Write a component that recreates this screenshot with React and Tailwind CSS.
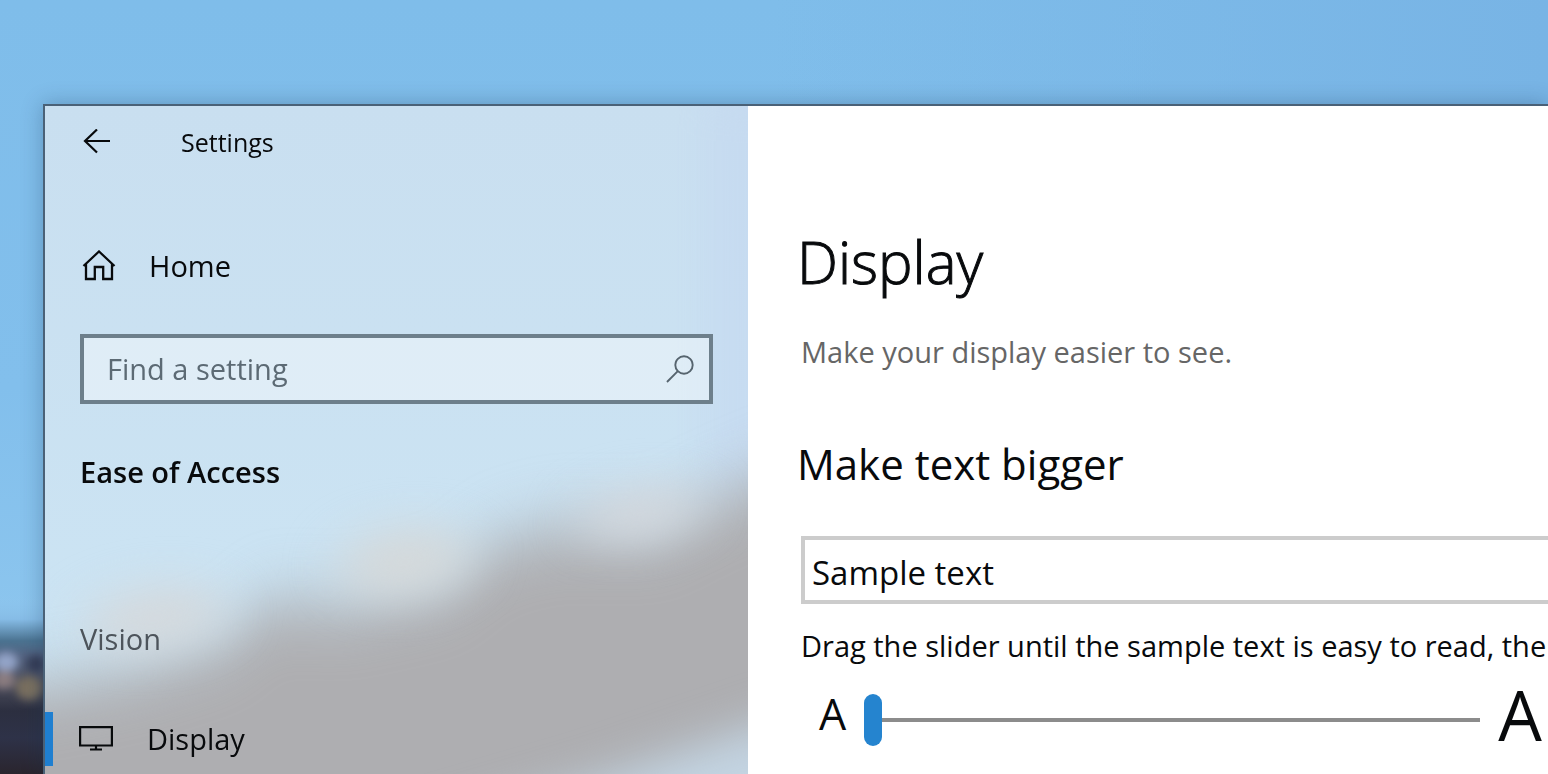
import { useState } from 'react';

// --- WALLPAPER ---
function Wallpaper() {
  return (
    <div className="absolute inset-0 bg-gradient-to-b from-[#7fbdea] via-[#82bfec] to-[#92c9ef]">
      <div className="absolute inset-0 bg-gradient-to-r from-transparent via-transparent to-[#78b4e5]" />
      <svg className="absolute bottom-0 left-0" width="60" height="180" viewBox="0 594 60 180" aria-hidden="true">
        <defs>
          <linearGradient id="shore" x1="0" y1="594" x2="0" y2="774" gradientUnits="userSpaceOnUse">
            <stop offset="0" stopColor="#8fc6ee" stopOpacity="0" />
            <stop offset="0.14" stopColor="#86bce6" />
            <stop offset="0.26" stopColor="#4b7391" />
            <stop offset="0.34" stopColor="#536482" />
            <stop offset="0.5" stopColor="#4b4d5c" />
            <stop offset="0.65" stopColor="#2c2f40" />
            <stop offset="0.8" stopColor="#2e3248" />
            <stop offset="1" stopColor="#2a252e" />
          </linearGradient>
          <filter id="soft" x="-100%" y="-100%" width="300%" height="300%" colorInterpolationFilters="sRGB">
            <feGaussianBlur stdDeviation="4" />
          </filter>
        </defs>
        <rect y="594" width="60" height="180" fill="url(#shore)" />
        <g filter="url(#soft)">
          <ellipse cx="6" cy="662" rx="12" ry="10" fill="#93a4c8" />
          <ellipse cx="4" cy="680" rx="11" ry="9" fill="#8c7d80" />
          <ellipse cx="29" cy="688" rx="13" ry="12" fill="#7a7060" />
          <ellipse cx="36" cy="664" rx="9" ry="9" fill="#343b55" />
        </g>
      </svg>
    </div>
  );
}

function Acrylic() {
  return (
    <svg className="absolute inset-0 h-full w-full" viewBox="0 0 703 668" preserveAspectRatio="none" aria-hidden="true">
      <defs>
        <linearGradient id="sky" x1="0" y1="0" x2="0" y2="1">
          <stop offset="0" stopColor="#c9dff0" />
          <stop offset="1" stopColor="#cce5f4" />
        </linearGradient>
        <filter id="haze" x="-20%" y="-50%" width="140%" height="200%" colorInterpolationFilters="sRGB">
          <feGaussianBlur stdDeviation="20 32" />
        </filter>
        <filter id="glow" x="-60%" y="-200%" width="220%" height="500%" colorInterpolationFilters="sRGB">
          <feGaussianBlur stdDeviation="26 22" />
        </filter>
      </defs>
      <rect width="703" height="668" fill="url(#sky)" />
      <rect x="660" y="-40" width="140" height="440" fill="#c3d6f0" opacity="0.5" filter="url(#haze)" />
      <g filter="url(#haze)">
        <path d="M-80 590 L0 580 L90 562 L180 534 L225 496 L300 500 L400 478 L450 438 L510 422 L610 424 L665 396 L720 372 L820 340 L820 820 L-80 820 Z" fill="#aeaeb1" />
      </g>
      <g filter="url(#glow)">
        <ellipse cx="110" cy="512" rx="72" ry="30" fill="#d5d9dc" transform="rotate(-8 110 512)" />
        <ellipse cx="360" cy="456" rx="66" ry="34" fill="#d5d9da" transform="rotate(-8 360 456)" />
        <ellipse cx="595" cy="408" rx="62" ry="24" fill="#d4d8dd" transform="rotate(-10 595 408)" />
        <path d="M360 730 L560 672 L760 604 L760 730 Z" fill="#c3d4e2" />
      </g>
    </svg>
  );
}

// --- ICONS ---
const BackIcon = () => (
  <svg width="28" height="26" viewBox="0 0 28 26" fill="none" stroke="currentColor" strokeWidth="2.2" aria-hidden="true">
    <path d="M27 12H2M14 0.500L2 12l12 11.500" />
  </svg>
);

const HomeIcon = () => (
  <svg width="34" height="32" viewBox="0 0 34 32" fill="none" stroke="currentColor" strokeWidth="2.3" aria-hidden="true">
    <path d="M1.500 16L17 1.500 32.500 16M4 13.500v15.500h8.800V17h8.400v12H30V13.500" />
  </svg>
);

const SearchIcon = () => (
  <svg width="28" height="28" viewBox="0 0 28 28" fill="none" stroke="currentColor" strokeWidth="1.9" aria-hidden="true">
    <circle cx="18" cy="10" r="8.700" />
    <path d="M11.800 16.200L1 27" />
  </svg>
);

const MonitorIcon = () => (
  <svg width="34" height="26" viewBox="0 0 34 26" fill="none" stroke="currentColor" strokeWidth="2.2" aria-hidden="true">
    <path d="M1.100 1.100h31.800v18.400H1.100zM17 19.500v4M11 23.500h12" />
  </svg>
);

// --- SIDEBAR ---
function Sidebar() {
  return (
    <aside className="relative w-[703px] shrink-0 overflow-hidden">
      <Acrylic />
      <div className="relative">
        <div className="flex h-[72px] items-center px-[38px]">
          <button type="button" aria-label="Back" className="mr-[70px]">
            <BackIcon />
          </button>
          <span className="text-[25px] leading-8">Settings</span>
        </div>

        <a href="#home" className="mt-14 flex h-16 items-center gap-[33px] px-[37px] text-[29px]">
          <HomeIcon />
          Home
        </a>

        <label className="mx-[35px] mt-9 flex h-[70px] items-center border-4 border-[#6d7f8b] bg-white/40 px-[15px] text-[#56646e]">
          <input
            type="text"
            aria-label="Find a setting"
            placeholder="Find a setting"
            className="min-w-0 flex-1 bg-transparent px-2 text-[29px] outline-none placeholder:text-[#5c6a74]"
          />
          <SearchIcon />
        </label>

        <h2 className="mt-12 px-[35px] text-[29px] leading-10 font-semibold">Ease of Access</h2>
        <h3 className="mt-[127px] px-[35px] text-[29px] leading-10 text-[#4d545b]">Vision</h3>

        <a
          href="#display"
          aria-current="page"
          className="mt-[53px] flex h-[54px] items-center gap-[34px] border-l-8 border-[#1f7fd0] px-[26px] text-[29px]"
        >
          <MonitorIcon />
          Display
        </a>
      </div>
    </aside>
  );
}

// --- DISPLAY PAGE ---
function DisplayPage() {
  const [size, setSize] = useState(0);

  return (
    <main className="min-w-0 flex-1 overflow-hidden bg-white pl-[53px]">
      <h1 className="mt-[116px] -ml-1 text-[58px] leading-20 font-light [-webkit-text-stroke:1px_currentColor]">Display</h1>
      <p className="mt-[30px] text-[29px] leading-10 whitespace-nowrap text-[#666666]">Make your display easier to see.</p>
      <h2 className="mt-16 -ml-1 text-[42px] leading-14">Make text bigger</h2>

      <input
        type="text"
        aria-label="Sample text"
        defaultValue="Sample text"
        className="mt-11 block h-[68px] w-full border-4 border-r-0 border-[#cccccc] bg-white px-[7px] pt-1 text-[33px] outline-none"
      />

      <p className="mt-[22px] text-[29px] leading-10 whitespace-nowrap">
        Drag the slider until the sample text is easy to read, the
      </p>

      <div className="mt-[14px] flex h-[80px] items-center pr-[6px] pl-[18px]">
        <span className="pb-3 text-[43px] leading-14" aria-hidden="true">A</span>
        <input
          type="range"
          aria-label="Text size"
          min="0"
          max="100"
          value={size}
          onChange={(e) => setSize(Number(e.target.value))}
          className="mr-[18px] ml-[18px] h-[52px] min-w-0 flex-1 appearance-none bg-transparent outline-none [&::-webkit-slider-runnable-track]:h-1 [&::-webkit-slider-runnable-track]:bg-[#8c8c8c] [&::-webkit-slider-thumb]:-mt-6 [&::-webkit-slider-thumb]:h-[52px] [&::-webkit-slider-thumb]:w-[18px] [&::-webkit-slider-thumb]:appearance-none [&::-webkit-slider-thumb]:rounded-full [&::-webkit-slider-thumb]:bg-[#2584cf]"
        />
        <span className="pb-3 text-[69px] leading-20" aria-hidden="true">A</span>
      </div>
    </main>
  );
}

export default function App() {
  return (
    <div className="relative flex min-h-screen overflow-hidden pt-[104px] pl-[43px] font-['Open_Sans','Noto_Sans',sans-serif] text-[#080a0c]">
      <Wallpaper />
      <div className="relative flex min-w-0 flex-1 border-t-2 border-l-2 border-[#4a6177] shadow-[0_0_20px_rgba(20,50,80,0.3)]">
        <Sidebar />
        <DisplayPage />
      </div>
    </div>
  );
}
